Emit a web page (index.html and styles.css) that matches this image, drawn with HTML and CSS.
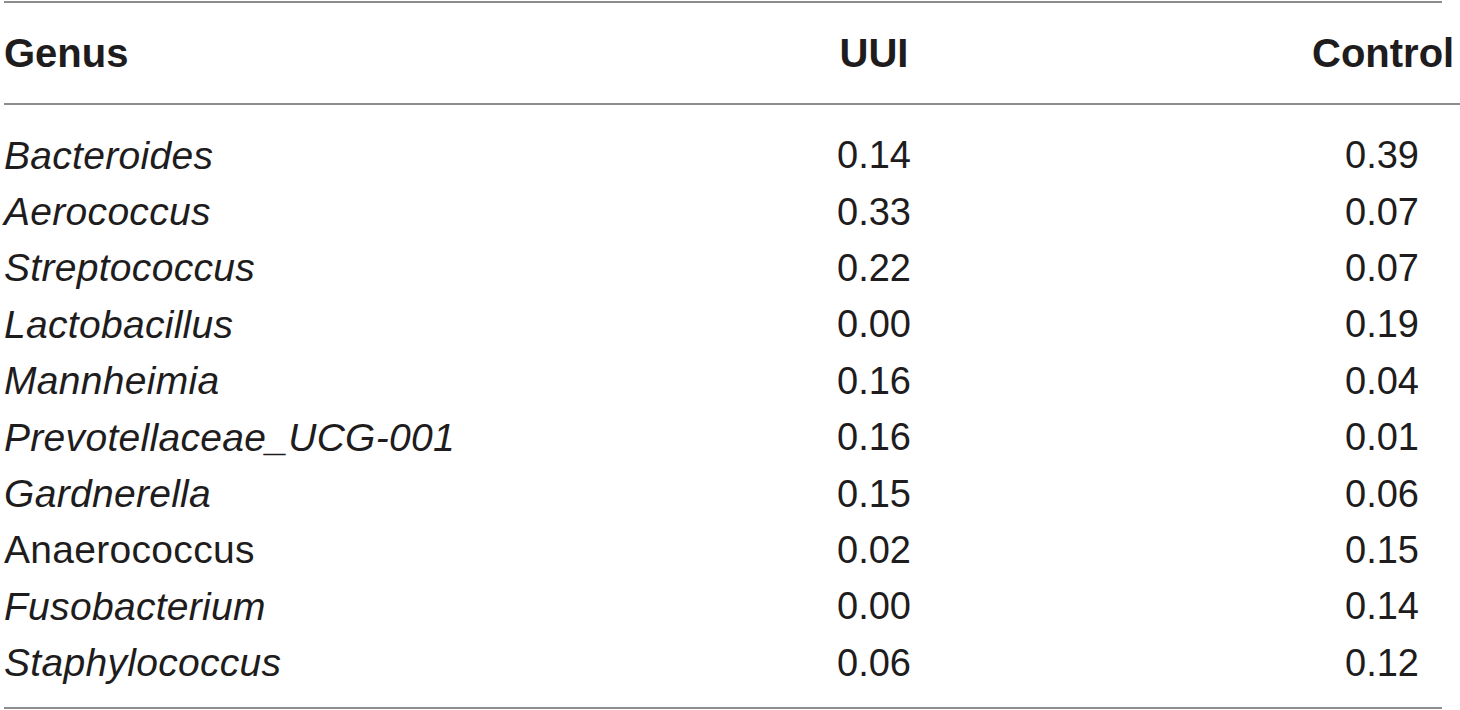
FILE: index.html
```html
<!DOCTYPE html>
<html lang="en">
<head>
<meta charset="utf-8">
<title>Genus table</title>
<link rel="stylesheet" href="styles.css">
</head>
<body>
<div class="table">
  <div class="rule"></div>
  <div class="row head">
    <div class="cell genus">Genus</div>
    <div class="cell uui">UUI</div>
    <div class="cell control">Control</div>
  </div>
  <div class="body">
    <div class="row"><div class="cell genus"><i>Bacteroides</i></div><div class="cell uui">0.14</div><div class="cell control">0.39</div></div>
    <div class="row"><div class="cell genus"><i>Aerococcus</i></div><div class="cell uui">0.33</div><div class="cell control">0.07</div></div>
    <div class="row"><div class="cell genus"><i>Streptococcus</i></div><div class="cell uui">0.22</div><div class="cell control">0.07</div></div>
    <div class="row"><div class="cell genus"><i>Lactobacillus</i></div><div class="cell uui">0.00</div><div class="cell control">0.19</div></div>
    <div class="row"><div class="cell genus"><i>Mannheimia</i></div><div class="cell uui">0.16</div><div class="cell control">0.04</div></div>
    <div class="row"><div class="cell genus"><i>Prevotellaceae_UCG-001</i></div><div class="cell uui">0.16</div><div class="cell control">0.01</div></div>
    <div class="row"><div class="cell genus"><i>Gardnerella</i></div><div class="cell uui">0.15</div><div class="cell control">0.06</div></div>
    <div class="row"><div class="cell genus">Anaerococcus</div><div class="cell uui">0.02</div><div class="cell control">0.15</div></div>
    <div class="row"><div class="cell genus"><i>Fusobacterium</i></div><div class="cell uui">0.00</div><div class="cell control">0.14</div></div>
    <div class="row"><div class="cell genus"><i>Staphylococcus</i></div><div class="cell uui">0.06</div><div class="cell control">0.12</div></div>
  </div>
  <div class="rule"></div>
</div>
</body>
</html>
```
FILE: styles.css
```css
html, body {
  margin: 0;
  padding: 0;
  background: #ffffff;
}

body {
  font-family: "Liberation Sans", Arial, sans-serif;
  color: #1e1c1d;
  overflow: hidden;
}

.table {
  margin: 1px 0 0 4px;
  width: 1456px;
}

.rule {
  height: 2px;
  margin-right: 18px;
  background: #8d8d8d;
}

.row {
  display: grid;
  grid-template-columns: 770px 200px 1fr;
  align-items: center;
  height: 56.4px;
  font-size: 38px;
}

.body .genus {
  font-size: 39px;
  letter-spacing: 0.3px;
}

.row i {
  font-style: italic;
}

.head {
  height: 100px;
  font-size: 40px;
  font-weight: bold;
  border-bottom: 2px solid #8d8d8d;
}

.cell {
  white-space: nowrap;
  line-height: 1;
}

.uui {
  text-align: center;
}

.control {
  justify-self: end;
  width: 140px;
  margin-right: 8px;
  text-align: center;
}

.body {
  padding: 22px 0 16px;
}
```
